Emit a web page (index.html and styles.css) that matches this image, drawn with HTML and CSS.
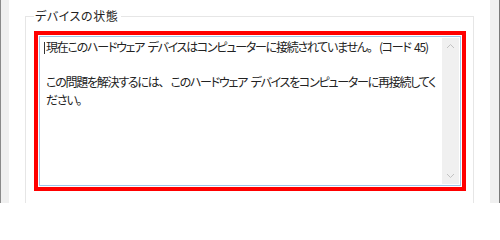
FILE: index.html
```html
<!DOCTYPE html>
<html lang="ja">
<head>
<meta charset="utf-8">
<link rel="stylesheet" href="styles.css">
</head>
<body>
<div class="window">
  <div class="edge-left"></div>
  <div class="main">
    <fieldset class="group">
      <legend class="group-title">デバイスの状態</legend>
      <div class="highlight">
        <div class="textbox">
          <div class="text">
            <p class="line"><span class="caret"></span>現在このハードウェア デバイスはコンピューターに接続されていません<span class="punct">。</span>(コード 45)</p>
            <p class="line blank">&nbsp;</p>
            <p class="line">この問題を解決するには<span class="punct">、</span>このハードウェア デバイスをコンピューターに再接続してください<span class="punct">。</span></p>
          </div>
          <div class="scrollbar">
            <svg class="arrow" width="17" height="17" viewBox="0 0 17 17"><path d="M5 10 L8.5 6.5 L12 10" fill="none" stroke="#c2c2c2" stroke-width="1"/></svg>
            <svg class="arrow" width="17" height="17" viewBox="0 0 17 17"><path d="M5 7 L8.5 10.5 L12 7" fill="none" stroke="#c2c2c2" stroke-width="1"/></svg>
          </div>
        </div>
      </div>
    </fieldset>
  </div>
  <div class="edge-right"></div>
</div>
</body>
</html>
```
FILE: styles.css
```css
html, body {
  margin: 0;
  padding: 0;
  background: #ffffff;
}
body {
  width: 500px;
  height: 203px;
  overflow: hidden;
  font-family: "Noto Sans CJK JP", "Noto Sans", sans-serif;
  color: #222;
}
.window {
  display: flex;
  height: 203px;
}
.edge-left {
  width: 8px;
  background: #f0f0f0;
  border-left: 1px solid #8a8a8a;
}
.edge-right {
  width: 9px;
  background: #f0f0f0;
  border-right: 1px solid #7a7a7a;
}
.main {
  flex: 1;
  background: #fff;
  padding: 8px 16px 0 16px;
}
.group {
  margin: 0;
  height: 200px;
  border: 1px solid #e6e6e6;
  border-bottom: none;
  padding: 7px 7px 0 8px;
  box-sizing: border-box;
}
.group-title {
  font-size: 12px;
  line-height: 16px;
  padding: 0 3px 0 1px;
  margin-left: 0;
  color: #222;
  font-feature-settings: "palt";
  letter-spacing: 0.6px;
}
.highlight {
  border: 4px solid #ff0000;
  padding: 1px;
  background: #fff;
}
.textbox {
  display: flex;
  border: 1px solid #9cc6ea;
  padding: 1px;
  box-sizing: border-box;
  height: 150px;
}
.text {
  flex: 1;
  padding: 0 0 0 4px;
  font-size: 12px;
  line-height: 17.5px;
  font-feature-settings: "palt";
  letter-spacing: -1.25px;
  word-spacing: 2px;
}
.punct {
  font-feature-settings: normal;
  letter-spacing: 0;
}
.line {
  margin: 0;
  padding-left: 1px;
}
.caret {
  display: inline-block;
  width: 1px;
  height: 12px;
  background: #333;
  vertical-align: -2px;
  margin-left: -2px;
  margin-right: 1px;
}
.scrollbar {
  width: 17px;
  background: #f0f0f0;
  display: flex;
  flex-direction: column;
  justify-content: space-between;
}
.arrow {
  display: block;
}
```
